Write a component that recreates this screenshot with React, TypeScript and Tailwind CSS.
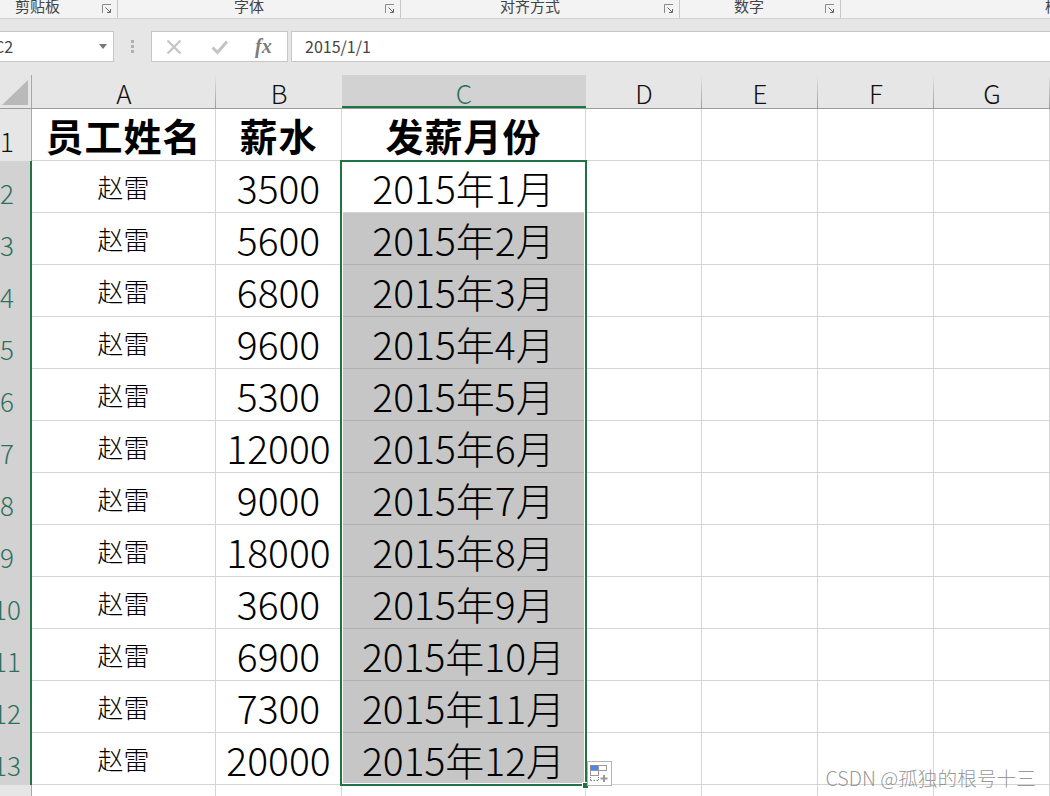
const cjk = '"Noto Sans CJK SC", "Liberation Sans", sans-serif';

function Launcher() {
  return (
    <svg width="10" height="10" viewBox="0 0 10 10" className="shrink-0">
      <path d="M0.5 9V0.5H9" fill="none" stroke="#8a8a8a" />
      <path d="M3.5 3.5L8 8" stroke="#666" />
      <path d="M5 8.5H8.5V5" fill="none" stroke="#666" />
    </svg>
  );
}

function Group({ label, width, labelLeft }: { label: string; width: number; labelLeft: number }) {
  return (
    <div className="flex h-full shrink-0 border-r border-[#c8c8c8]" style={{ width }}>
      <div className="h-full flex-1 text-[15px] leading-[14px] -mt-[1px] text-[#444]" style={{ paddingLeft: labelLeft }}>
        {label}
      </div>
      <div className="mr-[5px] mt-[4px]">
        <Launcher />
      </div>
    </div>
  );
}

function Ribbon() {
  return (
    <div className="flex h-[19px] w-full overflow-hidden border-b border-[#d2d2d2] bg-[#f3f3f3]" style={{ fontFamily: cjk }}>
      <Group label="剪贴板" width={118} labelLeft={15} />
      <Group label="字体" width={283} labelLeft={116} />
      <Group label="对齐方式" width={279} labelLeft={99} />
      <Group label="数字" width={161} labelLeft={54} />
      <div className="flex-1 pl-[204px] text-[15px] leading-[14px] -mt-[1px] text-[#444] whitespace-nowrap">样式</div>
    </div>
  );
}

function FormulaBar() {
  return (
    <div className="mt-[12px] flex h-[31px] w-full items-stretch">
      <div className="relative flex h-full w-[114px] shrink-0 items-center justify-between border border-l-0 border-[#c6c6c6] bg-white pr-[6px]">
        <span className="-ml-[6px] -mt-[2px] text-[16px] text-[#444]" style={{ fontFamily: cjk }}>C2</span>
        <svg width="8" height="5" viewBox="0 0 8 5"><path d="M0 0H8L4 5Z" fill="#777" /></svg>
      </div>
      <div className="flex w-[37px] shrink-0 flex-col items-center justify-center gap-[2px]">
        <i className="h-[3px] w-[3px] bg-[#b0b0b0]" />
        <i className="h-[3px] w-[3px] bg-[#b0b0b0]" />
        <i className="h-[3px] w-[3px] bg-[#b0b0b0]" />
      </div>
      <div className="flex h-full w-[137px] shrink-0 items-center border border-[#c6c6c6] bg-white pl-[14px]">
        <svg width="16" height="16" viewBox="0 0 16 16"><path d="M1.5 1.5L14.5 14.5M14.5 1.5L1.5 14.5" stroke="#c4c4c4" strokeWidth="2.2" /></svg>
        <svg width="18" height="16" viewBox="0 0 18 16" className="ml-[29px]"><path d="M1.5 8.5L6.5 13.5L16 2.5" fill="none" stroke="#c4c4c4" strokeWidth="3" /></svg>
        <span className="ml-[26px] -mt-[2px] text-[20px] italic font-bold leading-none text-[#7c7c7c]" style={{ fontFamily: '"Liberation Serif", serif' }}>fx</span>
      </div>
      <div className="ml-[3px] flex h-full flex-1 items-center border border-r-0 border-[#c6c6c6] bg-white pl-[13px] pb-[2px] text-[16px] text-[#444]" style={{ fontFamily: cjk }}>
        2015/1/1
      </div>
    </div>
  );
}

const cols = [
  { l: 'A', w: 184 },
  { l: 'B', w: 126 },
  { l: 'C', w: 244 },
  { l: 'D', w: 116 },
  { l: 'E', w: 116 },
  { l: 'F', w: 116 },
  { l: 'G', w: 116 },
];

function ColHeaders() {
  return (
    <div className="mt-[13px] flex h-[34px] w-full border-b border-[#9c9c9c]">
      <div className="relative h-full w-[32px] shrink-0 bg-gradient-to-r from-[#e6e6e6] from-[96%] to-[#a8a8a8] to-[96%]">
        <svg width="28" height="26" viewBox="0 0 28 26" className="absolute left-[2px] top-[5px]"><path d="M26 0V25H0Z" fill="#b9b9b9" /></svg>
      </div>
      {cols.map((c) => {
        const sel = c.l === 'C';
        return (
          <div
            key={c.l}
            className={
              sel
                ? 'relative flex h-full shrink-0 items-center justify-center border-b-2 border-[#217346] bg-[#d2d2d2] pt-[3px] text-[26px] font-light text-[#2f6f5c]'
                : 'relative flex h-full shrink-0 items-center justify-center pt-[1px] text-[26px] font-light text-[#111]'
            }
            style={{ width: c.w, fontFamily: cjk }}
          >
            {c.l}
            {!sel && c.l !== 'B' && <i className="absolute right-0 top-0 h-full w-px bg-gradient-to-b from-[#e6e6e6] to-[#9c9c9c]" />}
          </div>
        );
      })}
    </div>
  );
}

const data: [string, string][] = [
  ['3500', '2015年1月'],
  ['5600', '2015年2月'],
  ['6800', '2015年3月'],
  ['9600', '2015年4月'],
  ['5300', '2015年5月'],
  ['12000', '2015年6月'],
  ['9000', '2015年7月'],
  ['18000', '2015年8月'],
  ['3600', '2015年9月'],
  ['6900', '2015年10月'],
  ['7300', '2015年11月'],
  ['20000', '2015年12月'],
];

function RowNum({ n, sel }: { n: number; sel: boolean }) {
  return (
    <div
      className={
        sel
          ? 'flex h-full w-[32px] shrink-0 border-r-2 border-[#217346] bg-[#d2d2d2] text-[#2f6f5c]'
          : 'flex h-full w-[32px] shrink-0 border-r border-[#a8a8a8] bg-[#e6e6e6] text-[#111]'
      }
    >
      <div className="flex h-full w-[14px] items-end justify-center whitespace-nowrap pb-[2px] text-[26px] font-light leading-[36px]" style={{ fontFamily: cjk }}>
        {n}
      </div>
    </div>
  );
}

function Cell({ w, className, children }: { w: number; className?: string; children?: React.ReactNode }) {
  return (
    <div
      className={'flex h-full shrink-0 items-center justify-center whitespace-nowrap border-r border-b ' + (className ?? 'border-[#d4d4d4]')}
      style={{ width: w }}
    >
      {children}
    </div>
  );
}

function Grid() {
  return (
    <div className="relative w-full bg-white" style={{ fontFamily: cjk }}>
      <div className="flex h-[52px] text-[38px] font-bold leading-none text-black">
        <RowNum n={1} sel={false} />
        <Cell w={184}><span className="tracking-[1px] pt-[1px]">员工姓名</span></Cell>
        <Cell w={126}><span className="tracking-[1px] pt-[1px]">薪水</span></Cell>
        <Cell w={244}><span className="tracking-[1px] pt-[1px]">发薪月份</span></Cell>
        {[116, 116, 116, 116].map((w, i) => <Cell key={i} w={w} />)}
      </div>
      {data.map(([pay, month], i) => (
        <div key={i} className="flex h-[52px] font-light leading-none text-black">
          <RowNum n={i + 2} sel />
          <Cell w={184}><span className="text-[26px] pt-[1px]">赵雷</span></Cell>
          <Cell w={126}><span className="text-[39px] pt-[1px]">{pay}</span></Cell>
          <Cell w={244} className={i === 0 ? 'border-[#d4d4d4] bg-white' : 'border-[#b0b0b0] bg-[#c6c6c6]'}>
            <span className="text-[39px] pt-[1px]">{month}</span>
          </Cell>
          {[116, 116, 116, 116].map((w, j) => <Cell key={j} w={w} />)}
        </div>
      ))}
      <div className="flex h-[12px]">
        <div className="h-full w-[32px] shrink-0 border-r border-[#a8a8a8] bg-[#e6e6e6]" />
        {cols.map((c) => <div key={c.l} className="h-full shrink-0 border-r border-[#d4d4d4]" style={{ width: c.w }} />)}
      </div>

      {/* selection outline */}
      <div className="pointer-events-none absolute left-[340px] top-[51px] h-[626px] w-[247px] border-2 border-[#217346]">
        <div className="h-full w-full border border-white" />
      </div>
      <div className="absolute left-[582px] top-[673px] h-[7px] w-[7px] border border-white bg-[#217346]" />

      {/* quick analysis tag */}
      <div className="absolute left-[587px] top-[652px] h-[25px] w-[25px] border border-[#b4b4b4] bg-white">
        <svg width="23" height="23" viewBox="0 0 23 23">
          <rect x="2.5" y="3.5" width="8" height="5" fill="#4a86f0" stroke="#8a8a8a" />
          <rect x="10.5" y="3.5" width="8" height="5" fill="#fff" stroke="#9a9a9a" />
          <rect x="2.5" y="8.5" width="8" height="5" fill="#fff" stroke="#9a9a9a" />
          <path d="M2.5 18.5H11" stroke="#777" strokeDasharray="1.5 1.5" />
          <path d="M2.5 15V18M10.5 15V18" stroke="#777" strokeDasharray="1 1" />
          <path d="M16 13V20M12.5 16.5H19.5" stroke="#999" strokeWidth="2" />
        </svg>
      </div>
    </div>
  );
}

export default function App() {
  return (
    <div className="relative h-[796px] w-[1050px] overflow-hidden bg-[#e6e6e6]">
      <Ribbon />
      <FormulaBar />
      <ColHeaders />
      <Grid />
      <div className="absolute right-[14px] top-[766px] text-[19.7px] font-light leading-[24px] text-[#8c8c8c]/90" style={{ fontFamily: cjk }}>
        CSDN @孤独的根号十三
      </div>
    </div>
  );
}
